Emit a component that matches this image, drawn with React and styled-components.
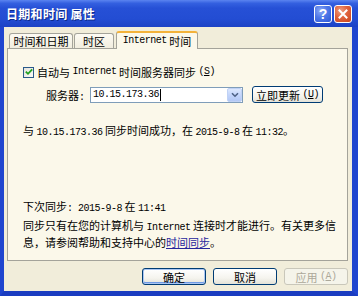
import React from "react";
import styled, { createGlobalStyle, css } from "styled-components";

const Global = createGlobalStyle`
  html, body { margin: 0; padding: 0; background: #0b1f7a; }
  body { width: 358px; height: 296px; overflow: hidden; }
  * { box-sizing: border-box; }
`;

const CJK = `"Noto Sans CJK SC", "Noto Sans", sans-serif`;

const Window = styled.div`
  width: 358px;
  height: 296px;
  display: flex;
  flex-direction: column;
  font-family: ${CJK};
  font-size: 11px;
  color: #000;
`;

const TitleBar = styled.div`
  height: 27px;
  flex: none;
  display: flex;
  align-items: center;
  padding: 0 6px 0 6px;
  background: linear-gradient(
    180deg,
    #5b84f0 0%,
    #3460e0 12%,
    #2650d6 30%,
    #234dd3 70%,
    #1c42c5 100%
  );
`;

const Title = styled.div`
  flex: 1;
  color: #fff;
  font-weight: 700;
  font-size: 12px;
  letter-spacing: 0.3px;
  text-shadow: 1px 1px 0 #0d2a8a;
`;

const CapButton = styled.div`
  width: 18px;
  height: 18px;
  border: 1px solid #fff;
  border-radius: 3px;
  display: flex;
  align-items: center;
  justify-content: center;
  margin-left: 2px;
  margin-top: 1px;
  color: #fff;
  font-family: "Liberation Sans", sans-serif;
  font-weight: 700;
  font-size: 14px;
  ${(p) =>
    p.$close
      ? css`
          background: radial-gradient(circle at 35% 30%, #f0a083 0%, #e0623c 45%, #c9441c 100%);
        `
      : css`
          background: radial-gradient(circle at 35% 30%, #8eaaf6 0%, #4f78e8 45%, #2e57d6 100%);
        `}
`;

const Frame = styled.div`
  flex: 1;
  display: flex;
  flex-direction: column;
  background: #f1edda;
  border-left: 4px solid #1f45cf;
  border-right: 6px solid #1f45cf;
  border-bottom: 5px solid #1a3cc0;
  padding: 4px 4px 6px 3px;
`;

const Tabs = styled.div`
  height: 17px;
  display: flex;
  align-items: flex-end;
  padding-left: 2px;
  position: relative;
  z-index: 1;
`;

const Tab = styled.div`
  width: ${(p) => p.$w}px;
  display: flex;
  align-items: center;
  justify-content: center;
  white-space: nowrap;
  border: 1px solid #a4a39a;
  border-bottom: none;
  border-radius: 3px 3px 0 0;
  margin-right: 1px;
  ${(p) =>
    p.$active
      ? css`
          height: 18px;
          margin-bottom: -1px;
          margin-left: 1px;
          background: #fbf8ea;
          border-color: #a4a39a;
          border-top: 2px solid #f3b23a;
          padding-bottom: 1px;
        `
      : css`
          height: 15px;
          background: linear-gradient(180deg, #fdfbf3 0%, #f1edde 100%);
        `}
`;

const Latin = styled.span`
  font-family: "Liberation Mono", "DejaVu Sans Mono", monospace;
  font-size: 10px;
  letter-spacing: -0.5px;
`;

const Panel = styled.div`
  flex: 1;
  display: flex;
  flex-direction: column;
  background: #fbf8ea;
  border: 1px solid #a4a39a;
  padding: 17px 15px 11px 15px;
`;

const CheckRow = styled.label`
  display: flex;
  align-items: center;
  height: 12px;
  line-height: 12px;
`;

const CheckBox = styled.span`
  width: 11px;
  height: 11px;
  border: 1px solid #2a5a8a;
  background: linear-gradient(135deg, #e4e3dc 0%, #fbfbf8 100%);
  display: flex;
  align-items: center;
  justify-content: center;
  margin-right: 3px;
`;

const ServerRow = styled.div`
  display: flex;
  align-items: center;
  height: 17px;
  margin-top: 8px;
  padding-left: 23px;
`;

const FieldLabel = styled.span`
  width: 44px;
  white-space: nowrap;
`;

const Combo = styled.div`
  width: 153px;
  height: 16px;
  border: 1px solid #7f9db9;
  background: #fff;
  display: flex;
  align-items: center;
  padding-left: 2px;
`;

const ComboText = styled.span`
  flex: 1;
  display: flex;
  align-items: center;
`;

const Caret = styled.span`
  width: 1px;
  height: 12px;
  background: #000;
  margin-left: 1px;
`;

const DropButton = styled.span`
  width: 15px;
  height: 14px;
  border: 1px solid #c0d2f5;
  border-radius: 2px;
  background: linear-gradient(180deg, #dde8fd 0%, #c3d5fb 50%, #b3c8f5 100%);
  display: flex;
  align-items: center;
  justify-content: center;
`;

const XPButton = styled.button`
  height: ${(p) => p.$h || 17}px;
  width: ${(p) => p.$w}px;
  margin-left: ${(p) => p.$ml || 0}px;
  padding: 0;
  font-family: ${CJK};
  font-size: 11px;
  color: #000;
  border: 1px solid #003c74;
  border-radius: 3px;
  background: linear-gradient(180deg, #ffffff 0%, #f5f4ee 60%, #e3e2d8 100%);
  display: flex;
  align-items: center;
  justify-content: center;
  white-space: nowrap;
  ${(p) =>
    p.$default &&
    css`
      box-shadow: inset 0 0 0 1px #aac6f3, inset 0 -1px 0 1px #6f9ae4;
    `}
  ${(p) =>
    p.disabled &&
    css`
      border-color: #c9c7ba;
      background: #f5f4ea;
      color: #aca899;
    `}
`;

const Line = styled.div`
  height: 14px;
  line-height: 14px;
  white-space: nowrap;
`;

const Status = styled(Line)`
  margin-top: 20px;
`;

const Footer = styled.div`
  margin-top: auto;
  display: flex;
  flex-direction: column;
  gap: 2px;
`;

const Para = styled.div`
  line-height: 14px;
  white-space: nowrap;
`;

const Link = styled.a`
  color: #27279c;
  text-decoration: underline;
`;

const ButtonRow = styled.div`
  display: flex;
  justify-content: flex-end;
  margin-top: 7px;
  height: 17px;
`;

export default function App() {
  return (
    <>
      <Global />
      <Window>
        <TitleBar>
          <Title>日期和时间 属性</Title>
          <CapButton>?</CapButton>
          <CapButton $close>
            <svg width="10" height="10" viewBox="0 0 10 10">
              <path d="M1.5 1.5 L8.5 8.5 M8.5 1.5 L1.5 8.5" stroke="#fff" strokeWidth="2" strokeLinecap="square" />
            </svg>
          </CapButton>
        </TitleBar>
        <Frame>
          <Tabs>
            <Tab $w={64}>时间和日期</Tab>
            <Tab $w={40}>时区</Tab>
            <Tab $w={82} $active>
              <Latin>Internet</Latin>&nbsp;时间
            </Tab>
          </Tabs>
          <Panel>
            <CheckRow>
              <CheckBox>
                <svg width="8" height="8" viewBox="0 0 8 8">
                  <path d="M0.8 3.6 L3 5.8 L7.2 1.4" fill="none" stroke="#21a121" strokeWidth="1.8" />
                </svg>
              </CheckBox>
              自动与&nbsp;<Latin>Internet</Latin>&nbsp;时间服务器同步&nbsp;
              <Latin>
                (<u>S</u>)
              </Latin>
            </CheckRow>
            <ServerRow>
              <FieldLabel>
                服务器<Latin>:</Latin>
              </FieldLabel>
              <Combo>
                <ComboText>
                  <Latin>10.15.173.36</Latin>
                  <Caret />
                </ComboText>
                <DropButton>
                  <svg width="8" height="6" viewBox="0 0 8 6">
                    <path d="M1 1.2 L4 4.2 L7 1.2" fill="none" stroke="#4d6185" strokeWidth="1.6" />
                  </svg>
                </DropButton>
              </Combo>
              <XPButton $w={71} $ml={9}>
                立即更新&nbsp;
                <Latin>
                  (<u>U</u>)
                </Latin>
              </XPButton>
            </ServerRow>
            <Status>
              与 <Latin>10.15.173.36</Latin> 同步时间成功，在 <Latin>2015-9-8</Latin> 在{" "}
              <Latin>11:32</Latin>。
            </Status>
            <Footer>
              <Para>
                下次同步<Latin>: 2015-9-8</Latin> 在 <Latin>11:41</Latin>
              </Para>
              <Para>
                同步只有在您的计算机与 <Latin>Internet</Latin> 连接时才能进行。有关更多信
                <br />
                息，请参阅帮助和支持中心的<Link>时间同步</Link>。
              </Para>
            </Footer>
          </Panel>
          <ButtonRow>
            <XPButton $w={64} $default>
              确定
            </XPButton>
            <XPButton $w={64} $ml={7}>
              取消
            </XPButton>
            <XPButton $w={64} $ml={7} disabled>
              应用&nbsp;
              <Latin>
                (<u>A</u>)
              </Latin>
            </XPButton>
          </ButtonRow>
        </Frame>
      </Window>
    </>
  );
}
